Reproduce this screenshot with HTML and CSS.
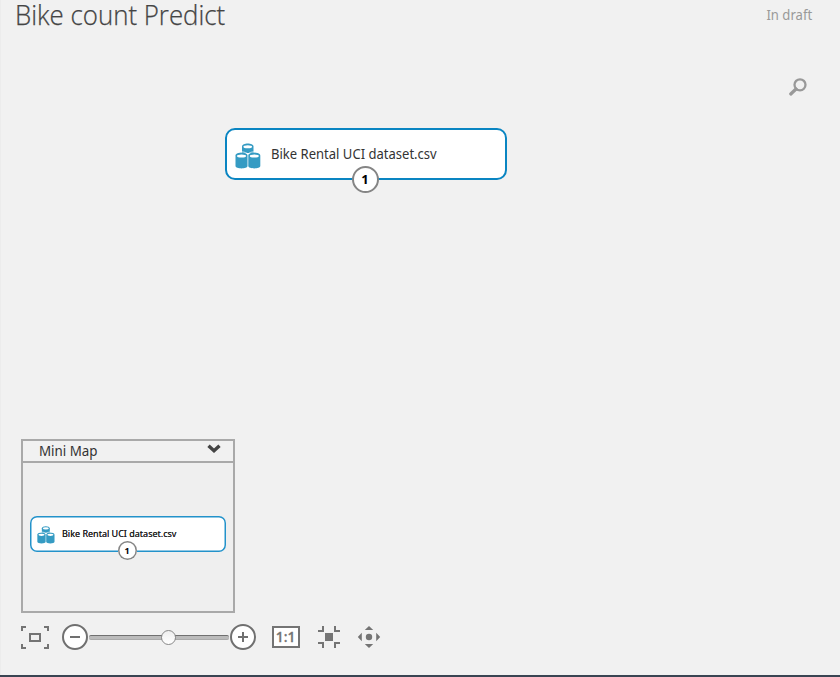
FILE: index.html
```html
<!DOCTYPE html>
<html lang="en">
<head>
<meta charset="utf-8">
<title>Bike count Predict</title>
<link rel="stylesheet" href="styles.css">
</head>
<body>
<svg width="0" height="0" class="defs">
  <defs>
    <symbol id="dataset" viewBox="0 0 26 27">
      <g fill="#359bc3">
        <path d="M7 4.500C7 .5 18.500 .5 18.500 4.500V11H7z"/>
        <path d="M.5 13.500C.5 9.500 12.500 9.500 12.500 13.500v10.500c0 3.200-12 3.200-12 0z"/>
        <path d="M13.300 13.500c0-4 12-4 12 0v10.500c0 3.200-12 3.200-12 0z"/>
      </g>
      <path fill="none" stroke="#fff" stroke-width=".7" d="M2 10.800C4.500 9.400 10 9.400 12.900 12 15.500 9.400 21 9.400 24 10.800"/>
      <g fill="#fff">
        <ellipse cx="12.750" cy="4.700" rx="4.300" ry="1.500"/>
        <ellipse cx="6.500" cy="14" rx="4.500" ry="1.500"/>
        <ellipse cx="19.300" cy="14" rx="4.500" ry="1.500"/>
      </g>
    </symbol>
  </defs>
</svg>
<main class="workspace">
  <header class="header">
    <h1 class="title">Bike count Predict</h1>
    <span class="status">In draft</span>
  </header>
  <div class="search">
    <svg width="18" height="19" viewBox="0 0 18 19" fill="none" stroke="#999"><circle cx="11" cy="6.800" r="5.500" stroke-width="2.300"/><path d="M7 11L1.800 16" stroke-width="3.200" stroke-linecap="round"/></svg>
  </div>
  <div class="node">
    <svg class="node-icon" width="26" height="27"><use href="#dataset"/></svg>
    <span class="node-label">Bike Rental UCI dataset.csv</span>
    <span class="port">1</span>
  </div>
  <section class="minimap">
    <div class="minimap-head">
      <span class="minimap-title">Mini Map</span>
      <svg width="14" height="10" viewBox="0 0 14 10" fill="none" stroke="#444" stroke-width="3.400"><path d="M1.500 1.800L7 6.800l5.500-5"/></svg>
    </div>
    <div class="minimap-body">
      <div class="node node-small">
        <svg class="node-icon" width="18" height="19"><use href="#dataset"/></svg>
        <span class="node-label">Bike Rental UCI dataset.csv</span>
        <span class="port">1</span>
      </div>
    </div>
  </section>
  <div class="toolbar">
    <svg class="fit" width="28" height="23" viewBox="0 0 28 23" fill="none" stroke="#747474" stroke-width="2"><path d="M1 5V1h4M23 1h4v4M1 18v4h4M23 22h4v-4"/><path d="M9 8h10v7H9z"/></svg>
    <svg class="minus" width="26" height="26" viewBox="0 0 26 26" fill="none" stroke="#707070" stroke-width="2"><circle cx="13" cy="13" r="12" fill="#fff"/><path d="M8 13h10"/></svg>
    <div class="slider"><span class="thumb"></span></div>
    <svg class="plus" width="26" height="26" viewBox="0 0 26 26" fill="none" stroke="#707070" stroke-width="2"><circle cx="13" cy="13" r="12" fill="#fff"/><path d="M8 13h10M13 8v10"/></svg>
    <span class="actual"><span class="actual-text">1:1</span></span>
    <svg class="center" width="22" height="22" viewBox="0 0 22 22" fill="none" stroke="#747474" stroke-width="2"><path d="M0 5h5V0M17 0v5h5M0 17h5v5M17 22v-5h5"/><path d="M7 7h8v8H7z" fill="#747474" stroke="none"/></svg>
    <svg class="pan" width="24" height="22" viewBox="0 0 24 22" fill="#747474"><circle cx="12" cy="11" r="3.200"/><path d="M12 0l4.200 4H7.800zM12 22l4.200-4H7.800zM.8 11l4-4.200v8.400zM23.200 11l-4-4.200v8.400z"/></svg>
  </div>
</main>
<footer class="edge"></footer>
</body>
</html>
```
FILE: styles.css
```css
* { box-sizing: border-box; }
body {
  margin: 0;
  height: 677px;
  overflow: hidden;
  display: flex;
  flex-direction: column;
  background: #f1f1f1;
  font-family: "Noto Sans", sans-serif;
  color: #333;
}
.defs { position: absolute; }
.workspace {
  position: relative;
  flex: 1;
  display: flex;
  flex-direction: column;
  border-left: 1px solid #ececec;
}
.edge { height: 2px; background: #394452; }
.header {
  display: flex;
  justify-content: space-between;
  padding: 0 28px 0 14px;
  height: 76px;
}
.title {
  margin: 0;
  font: 300 27px/30px "Open Sans", sans-serif;
  color: #444;
  -webkit-text-stroke: .25px #444;
  white-space: nowrap;
  transform-origin: 0 0;
  transform: scaleX(.957);
}
.status { font-size: 13.5px; line-height: 30px; color: #999; transform-origin: 100% 0; transform: scaleX(.97); }
.search { display: flex; justify-content: flex-end; padding: 2px 33px 0 0; }
.node {
  position: absolute;
  left: 224px;
  top: 128px;
  width: 282px;
  height: 52px;
  display: flex;
  align-items: center;
  padding-left: 8px;
  background: #fff;
  border: 2px solid #0a85c2;
  border-radius: 10px;
}
.node-icon { flex: none; margin-top: 3px; }
.node-label {
  margin-left: 10px;
  font-size: 13.5px;
  white-space: nowrap;
  transform-origin: 0 50%;
  transform: scaleX(.966);
}
.port {
  position: absolute;
  left: 124.5px;
  top: 35.5px;
  width: 27px;
  height: 27px;
  border: 2px solid #858585;
  border-radius: 50%;
  background: #fff;
  color: #000;
  font: 700 13px/22px "Noto Sans", sans-serif;
  text-align: center;
}
.minimap {
  width: 214px;
  height: 174px;
  margin: auto 0 0 20px;
  border: 2px solid #a9a9a9;
}
.minimap-head {
  height: 22px;
  display: flex;
  justify-content: space-between;
  padding: 3px 12px 0 16px;
  border-bottom: 2px solid #a9a9a9;
}
.minimap-title { font-size: 13.5px; line-height: 15px; transform-origin: 0 0; transform: scaleX(.99); }
.minimap-body { position: relative; height: 148px; background: #efefef; }
.node-small {
  left: 7px;
  top: 52.5px;
  width: 196px;
  height: 36px;
  padding-left: 6px;
  border: 0;
  box-shadow: inset 0 0 0 1.5px #2392ca;
  border-radius: 7px;
}
.node-small .node-icon { margin-left: 1px; margin-top: 2px; }
.node-small .node-label { margin-left: 7px; margin-top: -1px; font-size: 9px; color: #222; text-shadow: 0 0 .4px #333; transform: scaleX(1); }
.node-small .port {
  left: 87.5px;
  top: 25px;
  width: 19px;
  height: 19px;
  border: 0;
  box-shadow: inset 0 0 0 1.5px #858585;
  font-size: 9px;
  line-height: 19px;
}
.toolbar {
  display: flex;
  align-items: center;
  height: 26px;
  margin: 11px 0 25px 20px;
}
.toolbar > * { flex: none; }
.minus { margin-left: 13px; }
.slider {
  display: flex;
  align-items: center;
  justify-content: center;
  width: 140px;
  height: 5px;
  margin: 0 1px;
  border-top: 1px solid #707070;
  border-radius: 2px;
  background: #bbb;
  border-bottom: 1px solid #aaa;
}
.thumb {
  flex: none;
  width: 15px;
  height: 15px;
  margin-left: 19px;
  border: 1px solid #888;
  border-radius: 50%;
  background: linear-gradient(#eee, #fff);
}
.actual {
  display: flex;
  justify-content: center;
  width: 28px;
  height: 22px;
  margin-left: 16px;
  border: 2px solid #747474;
  background: #fff;
  color: #747474;
  font: 600 15px/17px "Open Sans", sans-serif;
}
.actual-text { transform: scaleX(.92); -webkit-text-stroke: .3px #747474; }
.center { margin-left: 18px; }
.pan { margin-left: 17px; }
```
